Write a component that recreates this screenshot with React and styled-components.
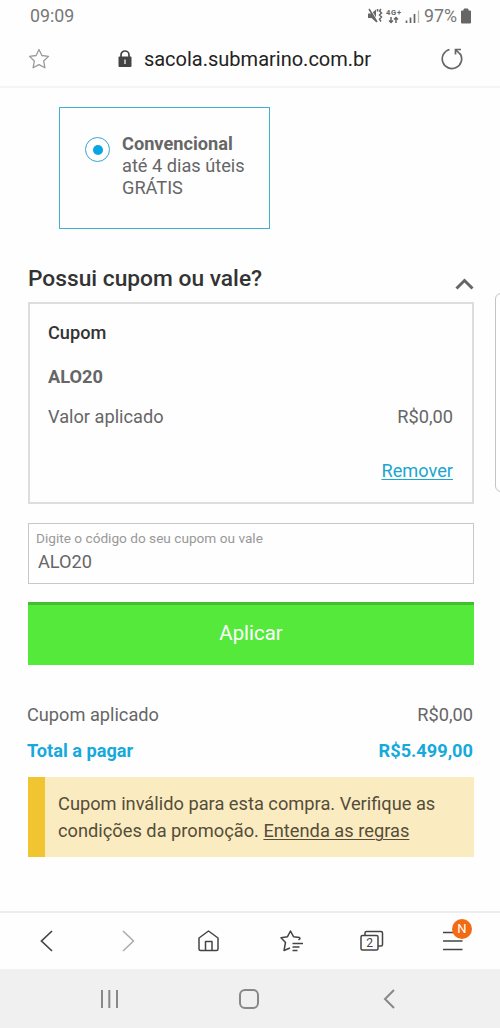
import React, { useState } from 'react';
import styled, { createGlobalStyle } from 'styled-components';

const GlobalStyle = createGlobalStyle`
  * {
    box-sizing: border-box;
  }
  body {
    margin: 0;
    background: #fefefe;
    font-family: Roboto, 'Liberation Sans', sans-serif;
    color: #666;
  }
`;

const Screen = styled.div`
  position: relative;
  display: flex;
  flex-direction: column;
  width: 500px;
  height: 1028px;
  overflow: hidden;
`;

const Text = styled.span`
  font-size: ${({ $size }) => $size || 18.2}px;
  font-weight: ${({ $weight }) => $weight || 400};
  line-height: ${({ $line }) => $line || 22}px;
  color: ${({ $color }) => $color || '#666'};
  white-space: nowrap;
`;

const Icon = styled.svg`
  display: block;
  flex: none;
  fill: none;
  stroke: ${({ $color }) => $color || '#444'};
  stroke-width: ${({ $stroke }) => $stroke || 1.5};
`;

// Top bars
const StatusBar = styled.div`
  display: flex;
  justify-content: space-between;
  align-items: center;
  height: 31px;
  padding: 0 28px 0 30px;
`;

const StatusIcons = styled.div`
  display: flex;
  align-items: center;
  gap: 3px;
`;

const AddressBar = styled.header`
  display: flex;
  justify-content: space-between;
  align-items: center;
  height: 57px;
  padding: 0 37px 0 28px;
  border-bottom: 2px solid #f4f4f4;
`;

const Address = styled.div`
  display: flex;
  align-items: center;
  gap: 12px;
  margin-right: 2px;
`;

// Page content
const Content = styled.main`
  flex: 1;
  padding: 19px 26px 0 28px;
`;

const ShippingOption = styled.div`
  display: flex;
  gap: 12px;
  width: 211px;
  height: 122px;
  margin-left: 31px;
  padding: 25px 0 0 25px;
  border: 1px solid #3fb0cf;
`;

const Radio = styled.span`
  display: flex;
  justify-content: center;
  align-items: center;
  width: 25px;
  height: 25px;
  margin-top: 4px;
  border: 1px solid #35a5d2;
  border-radius: 50%;
  &::after {
    content: '';
    width: 10px;
    height: 10px;
    border-radius: 50%;
    background: #08a5e3;
  }
`;

const Lines = styled.div`
  display: flex;
  flex-direction: column;
`;

const SectionHeader = styled.div`
  display: flex;
  justify-content: space-between;
  height: 73px;
  padding-top: 35px;
`;

const SectionTitle = styled.h2`
  margin: 1px 0 0;
  font-size: 22.75px;
  font-weight: 500;
  line-height: 28px;
  color: #333;
`;

const Caret = styled(Icon)`
  margin-top: 14px;
`;

const CouponCard = styled.section`
  display: flex;
  flex-direction: column;
  height: 202px;
  padding: 18px 19px 0 18px;
  border: 2px solid #ddd;
`;

const Row = styled.div`
  display: flex;
  justify-content: space-between;
  margin-top: ${({ $top }) => $top || 0}px;
`;

const Totals = styled.div`
  margin: 39px 1px 0 -1px;
`;

const Remove = styled.a`
  align-self: flex-end;
  margin-top: 32px;
  font-size: 18.2px;
  line-height: 22px;
  color: #1ba6cf;
  text-decoration: underline;
  text-underline-offset: 2px;
  text-decoration-thickness: 1px;
`;

const Field = styled.label`
  display: flex;
  flex-direction: column;
  height: 61px;
  margin-top: 19px;
  padding: 6px 8px 0 7px;
  border: 1px solid #c8c8c8;
`;

const Input = styled.input`
  width: 100%;
  height: 24px;
  margin-top: 2px;
  padding: 0 0 0 2px;
  border: 0;
  outline: none;
  background: transparent;
  font-family: inherit;
  font-size: 18.2px;
  color: #666;
`;

const Button = styled.button`
  display: block;
  width: 100%;
  height: 63px;
  margin-top: 18px;
  padding: 0 0 4px;
  border: 0;
  border-top: 3px solid #42bf2f;
  background: #54e93b;
  font-family: inherit;
  font-size: 20.4px;
  color: #fff;
`;

const Alert = styled.div`
  height: 80px;
  margin-top: 15px;
  padding: 13px 0 0 13px;
  border-left: 17px solid #f0c531;
  background: #faecc0;
`;

const Message = styled.p`
  margin: 0;
  font-size: 18.25px;
  line-height: 27px;
  color: #554d3a;
  white-space: nowrap;
`;

const Rules = styled.a`
  text-decoration: underline;
  text-decoration-thickness: 1px;
  text-underline-offset: 2px;
`;

// Edge panel handle that floats over the page
const EdgePanel = styled.div`
  position: absolute;
  top: 293px;
  right: -15px;
  width: 20px;
  height: 199px;
  border: 1px solid #c4c4c4;
  border-radius: 6px;
  background: #fff;
`;

// Bottom bars
const BrowserNav = styled.nav`
  display: flex;
  align-items: center;
  justify-content: space-between;
  height: 58px;
  padding: 0 35px 1px 35px;
  border-top: 2px solid #eee;
`;

const NavItem = styled.div`
  position: relative;
  width: 24px;
  height: 24px;
`;

const Badge = styled.span`
  position: absolute;
  top: -10px;
  left: 11px;
  width: 20px;
  height: 20px;
  border-radius: 50%;
  background: #f26a11;
  color: #fff;
  font-size: 13px;
  line-height: 20px;
  text-align: center;
`;

const SystemNav = styled.nav`
  display: flex;
  align-items: center;
  justify-content: space-between;
  height: 59px;
  padding: 1px 99px 0 97px;
  background: #f0f0f0;
`;

const Status = () => (
  <StatusBar>
    <Text $size={17.8} $color="#777">09:09</Text>
    <StatusIcons>
      <Icon width="54" height="20" viewBox="0 0 54 20" $color="#666">
        <path d="M1 7.500h3.500L9 3.500v12.500l-4.500-4H1z" fill="#666" stroke="none" />
        <path d="M3.500 3.500l8 13" stroke="#fefefe" strokeWidth="1.200" />
        <path d="M2 3l8 13M10.500 3v2.500M14 3l-1.500 2 2 2-2 2 2 2-2 2 1.500 2.500" strokeWidth="1.500" />
        <text x="19" y="9" fontSize="7.500" fontWeight="700" fill="#666" stroke="none" textLength="15">4G+</text>
        <path d="M24 11v5.500M22 14.500l2 2 2-2M29 17v-5.500M27 13.500l2-2 2 2" />
        <path d="M39.500 14.500v2.500M43.500 11.500v5.500M47.500 8v9" strokeWidth="1.700" />
        <path d="M51.500 4.500v12.500" strokeWidth="1.300" stroke="#bbb" />
      </Icon>
      <Text $size={17.8} $color="#777">97%</Text>
      <Icon width="12" height="16" viewBox="0 0 12 16">
        <path d="M1.500 3h2.500V1h4v2h2.500v12h-9z" fill="#666" stroke="#666" strokeWidth="1" />
      </Icon>
    </StatusIcons>
  </StatusBar>
);

const Browser = () => (
  <AddressBar>
    <Icon width="22" height="22" viewBox="0 0 22 22" $color="#999" $stroke={1.3}>
      <path d="M11 1.500l2.900 6 6.600.9-4.800 4.600 1.200 6.800-5.900-3.200-5.900 3.200 1.200-6.800L1.500 8.400l6.600-.9z" strokeLinejoin="round" />
    </Icon>
    <Address>
      <Icon width="14" height="18" viewBox="0 0 14 18">
        <rect x="0.500" y="6.500" width="13" height="10.500" rx="1" fill="#444" stroke="none" />
        <path d="M3 7V5a4 4 0 0 1 8 0v2" strokeWidth="1.700" />
        <path d="M7 9.500v4.500" stroke="#ddd" strokeWidth="1.500" />
      </Icon>
      <Text $size={20} $color="#222" $line={26}>sacola.submarino.com.br</Text>
    </Address>
    <Icon width="22" height="22" viewBox="0 0 22 22" $color="#666" $stroke={1.7}>
      <path d="M8.500 1.500A9.700 9.700 0 1 0 19.200 5.800" />
      <path d="M14.500 6.500V1.500h5.500M15 2l4.500 4.500" />
    </Icon>
  </AddressBar>
);

const App = () => {
  const [code, setCode] = useState('ALO20');

  return (
    <Screen>
      <GlobalStyle />
      <Status />
      <Browser />
      <Content>
        <ShippingOption>
          <Radio />
          <Lines>
            <Text $weight={700}>Convencional</Text>
            <Text>até 4 dias úteis</Text>
            <Text>GRÁTIS</Text>
          </Lines>
        </ShippingOption>
        <SectionHeader>
          <SectionTitle>Possui cupom ou vale?</SectionTitle>
          <Caret width="19" height="12" viewBox="0 0 19 12" $color="#666" $stroke={3}>
            <path d="M1.500 10.500l8-8 8 8" />
          </Caret>
        </SectionHeader>
        <CouponCard>
          <Text $weight={500} $color="#333">Cupom</Text>
          <Row $top={22}><Text $weight={700}>ALO20</Text></Row>
          <Row $top={18}>
            <Text>Valor aplicado</Text>
            <Text>R$0,00</Text>
          </Row>
          <Remove>Remover</Remove>
        </CouponCard>
        <Field>
          <Text $size={13.65} $line={17} $color="#999">Digite o código do seu cupom ou vale</Text>
          <Input value={code} onChange={(event) => setCode(event.target.value)} />
        </Field>
        <Button>Aplicar</Button>
        <Totals>
          <Row>
            <Text>Cupom aplicado</Text>
            <Text>R$0,00</Text>
          </Row>
          <Row $top={14}>
            <Text $weight={700} $color="#16a9dc">Total a pagar</Text>
            <Text $weight={700} $color="#16a9dc">R$5.499,00</Text>
          </Row>
        </Totals>
        <Alert>
          <Message>
            Cupom inválido para esta compra. Verifique as<br />
            condições da promoção. <Rules>Entenda as regras</Rules>
          </Message>
        </Alert>
      </Content>
      <EdgePanel />
      <BrowserNav>
        <NavItem>
          <Icon width="24" height="24" viewBox="0 0 24 24" $stroke={1.7}><path d="M17 2L6.500 12 17 22" /></Icon>
        </NavItem>
        <NavItem>
          <Icon width="24" height="24" viewBox="0 0 24 24" $color="#aaa"><path d="M7 2l10.500 10L7 22" /></Icon>
        </NavItem>
        <NavItem>
          <Icon width="24" height="24" viewBox="0 0 24 24">
            <path d="M2 9l9.500-7L21 9v11a1.500 1.500 0 0 1-1.500 1.500h-16A1.500 1.500 0 0 1 2 20zM8.500 21.500V12.500H15v9" strokeLinejoin="round" />
          </Icon>
        </NavItem>
        <NavItem>
          <Icon width="24" height="24" viewBox="0 0 24 24">
            <path d="M19.500 11l1.500-1.300-.5-1.200-6-.8L11.500 2l-3 5.700-6.500 1 4.500 4.800L5 21.500l6-2.500M13.500 14.500H24M13.500 18H20.500M13.500 21.500H18.500" strokeLinejoin="round" />
          </Icon>
        </NavItem>
        <NavItem>
          <Icon width="24" height="24" viewBox="0 0 24 24">
            <rect x="1" y="6.500" width="17" height="14.500" rx="1.500" />
            <path d="M5 6.500V4a1.500 1.500 0 0 1 1.500-1.500H21A1.500 1.500 0 0 1 22.500 4v11.500A1.500 1.500 0 0 1 21 17h-3" />
            <text x="9.600" y="18" fontSize="12" fontWeight="400" textAnchor="middle" fill="#444" stroke="none">2</text>
          </Icon>
        </NavItem>
        <NavItem>
          <Icon width="24" height="24" viewBox="0 0 24 24"><path d="M2 3.500h19.500M2 12h19.500M2 20.500h19.500" /></Icon>
          <Badge>N</Badge>
        </NavItem>
      </BrowserNav>
      <SystemNav>
        <Icon width="24" height="24" viewBox="0 0 24 24" $color="#888" $stroke={2}><path d="M5 3v18M12.300 3v18M20 3v18" /></Icon>
        <Icon width="24" height="24" viewBox="0 0 24 24" $color="#888" $stroke={2}><rect x="3" y="3" width="18" height="18" rx="5" /></Icon>
        <Icon width="24" height="24" viewBox="0 0 24 24" $color="#888" $stroke={2}><path d="M17 3l-9 9 9 9" /></Icon>
      </SystemNav>
    </Screen>
  );
};

export default App;
